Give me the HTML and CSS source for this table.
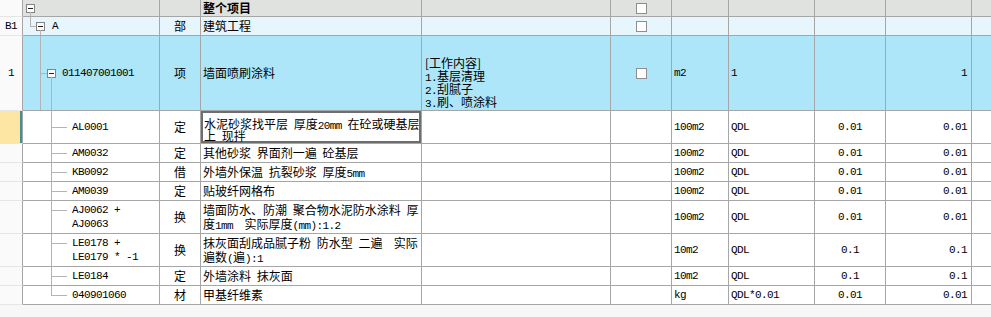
FILE: index.html
```html
<!DOCTYPE html>
<html><head><meta charset="utf-8"><link rel="stylesheet" href="styles.css"></head>
<body>
<div class="grid">
<div class="r hd">
<div class="c c0"></div>
<div class="c c1 t-h"><span class="box"></span></div>
<div class="c c2"></div>
<div class="c c3 b">整个项目</div>
<div class="c c4"></div>
<div class="c c5"><span class="chk"></span></div>
<div class="c c6"></div><div class="c c7"></div><div class="c c8"></div><div class="c c9"></div><div class="c c10"></div>
</div>
<div class="r rb1">
<div class="c c0 m">B1</div>
<div class="c c1 t-b1"><span class="box"></span><span class="m lbl">A</span></div>
<div class="c c2">部</div>
<div class="c c3">建筑工程</div>
<div class="c c4"></div>
<div class="c c5"><span class="chk"></span></div>
<div class="c c6"></div><div class="c c7"></div><div class="c c8"></div><div class="c c9"></div><div class="c c10"></div>
</div>
<div class="r r1">
<div class="c c0 m">1</div>
<div class="c c1 t-1"><span class="box"></span><span class="m lbl2">011407001001</span></div>
<div class="c c2">项</div>
<div class="c c3">墙面喷刷涂料</div>
<div class="c c4 work"><div class="t">[工作内容]<br><span class="m">1.</span>基层清理<br><span class="m">2.</span>刮腻子<br><span class="m">3.</span>刷、喷涂料</div></div>
<div class="c c5"><span class="chk"></span></div>
<div class="c c6 m">m2</div><div class="c c7 m">1</div><div class="c c8"></div><div class="c c9 m">1</div><div class="c c10"></div>
</div>
<div class="r h33 cur">
<div class="c c0"></div>
<div class="c c1 tc"><span class="code m">AL0001</span></div>
<div class="c c2">定</div>
<div class="c c3 edit"><div class="t">水泥砂浆找平层 厚度<span class="m">20mm</span> 在砼或硬基层<br>上 现拌</div></div>
<div class="c c4"></div><div class="c c5"></div>
<div class="c c6 m">100m2</div><div class="c c7 m">QDL</div><div class="c c8 m">0.01</div><div class="c c9 m">0.01</div><div class="c c10"></div>
</div>
<div class="r">
<div class="c c0"></div>
<div class="c c1 tc"><span class="code m">AM0032</span></div>
<div class="c c2">定</div>
<div class="c c3"><div class="t">其他砂浆 界面剂一遍 砼基层</div></div>
<div class="c c4"></div><div class="c c5"></div>
<div class="c c6 m">100m2</div><div class="c c7 m">QDL</div><div class="c c8 m">0.01</div><div class="c c9 m">0.01</div><div class="c c10"></div>
</div>
<div class="r">
<div class="c c0"></div>
<div class="c c1 tc"><span class="code m">KB0092</span></div>
<div class="c c2">借</div>
<div class="c c3"><div class="t">外墙外保温 抗裂砂浆 厚度<span class="m">5mm</span></div></div>
<div class="c c4"></div><div class="c c5"></div>
<div class="c c6 m">100m2</div><div class="c c7 m">QDL</div><div class="c c8 m">0.01</div><div class="c c9 m">0.01</div><div class="c c10"></div>
</div>
<div class="r">
<div class="c c0"></div>
<div class="c c1 tc"><span class="code m">AM0039</span></div>
<div class="c c2">定</div>
<div class="c c3">贴玻纤网格布</div>
<div class="c c4"></div><div class="c c5"></div>
<div class="c c6 m">100m2</div><div class="c c7 m">QDL</div><div class="c c8 m">0.01</div><div class="c c9 m">0.01</div><div class="c c10"></div>
</div>
<div class="r h33">
<div class="c c0"></div>
<div class="c c1 tc"><span class="code m">AJ0062 +<br>AJ0063</span></div>
<div class="c c2">换</div>
<div class="c c3"><div class="t">墙面防水、防潮 聚合物水泥防水涂料 厚<br>度<span class="m">1mm</span>  实际厚度<span class="m">(mm):1.2</span></div></div>
<div class="c c4"></div><div class="c c5"></div>
<div class="c c6 m">100m2</div><div class="c c7 m">QDL</div><div class="c c8 m">0.01</div><div class="c c9 m">0.01</div><div class="c c10"></div>
</div>
<div class="r h33">
<div class="c c0"></div>
<div class="c c1 tc"><span class="code m">LE0178 +<br>LE0179 * -1</span></div>
<div class="c c2">换</div>
<div class="c c3"><div class="t">抹灰面刮成品腻子粉 防水型 二遍  实际<br>遍数<span class="m">(</span>遍<span class="m">):1</span></div></div>
<div class="c c4"></div><div class="c c5"></div>
<div class="c c6 m">10m2</div><div class="c c7 m">QDL</div><div class="c c8 m">0.1</div><div class="c c9 m">0.1</div><div class="c c10"></div>
</div>
<div class="r">
<div class="c c0"></div>
<div class="c c1 tc"><span class="code m">LE0184</span></div>
<div class="c c2">定</div>
<div class="c c3"><div class="t">外墙涂料 抹灰面</div></div>
<div class="c c4"></div><div class="c c5"></div>
<div class="c c6 m">10m2</div><div class="c c7 m">QDL</div><div class="c c8 m">0.1</div><div class="c c9 m">0.1</div><div class="c c10"></div>
</div>
<div class="r">
<div class="c c0"></div>
<div class="c c1 tc last"><span class="code m">040901060</span></div>
<div class="c c2">材</div>
<div class="c c3">甲基纤维素</div>
<div class="c c4"></div><div class="c c5"></div>
<div class="c c6 m">kg</div><div class="c c7 m">QDL*0.01</div><div class="c c8 m">0.01</div><div class="c c9 m">0.01</div><div class="c c10"></div>
</div>
</div>
</body></html>
```
FILE: styles.css
```css
* { box-sizing: border-box; }
body {
  margin: 0;
  background: #f7f7f7;
  font-family: "Noto Sans CJK SC", sans-serif;
  font-size: 12px;
  color: #000;
}
.grid { background: #fff; }
.r {
  display: grid;
  grid-template-columns: 23px 137px 41px 221px 189px 61px 57px 86px 71px 86px 19px;
  height: 19px;
}
.r.hd { height: 17px; background: #dfe2df; }
.r.rb1 { background: #e6f6fc; }
.r.r1 { height: 75px; background: #ade6f8; }
.r.h33 { height: 33px; }
.c {
  position: relative;
  display: flex;
  align-items: center;
  white-space: pre;
  overflow: hidden;
  line-height: 14px;
  border-right: 1px solid #a6a6a6;
  border-bottom: 1px solid #a6a6a6;
  word-spacing: 3px;
}
.t { display: block; }
.c10 { border-right: none; }
.c0 {
  background: #fafafa;
  justify-content: center;
  border-bottom-color: #e6e6e6;
}
.cur .c0 { background: #fde6a3; box-shadow: inset -2px 0 0 #3f9096; }
.m {
  font-family: "Liberation Mono", monospace;
  font-size: 11px;
  letter-spacing: -0.6px;
  word-spacing: 0;
}
.t .m { line-height: 8px; }
.b { font-weight: bold; }
.c2 { justify-content: center; }
.c3 { padding-left: 2px; }
.c4 { padding-left: 3px; }
.c5 { justify-content: center; }
.c6 { padding-left: 2px; }
.c7 { padding-left: 2px; }
.c8 { justify-content: center; }
.c9 { justify-content: flex-end; padding-right: 4px; }
.chk {
  width: 11px;
  height: 11px;
  border: 1px solid #8e8e8e;
  background: #fff;
}
.box {
  position: relative;
  flex: none;
  width: 9px;
  height: 9px;
  border: 1px solid #848484;
  background: #fbfbfb;
}
.box::after {
  content: "";
  position: absolute;
  left: 1px;
  top: 3px;
  width: 5px;
  height: 1px;
  background: #222;
}
.t-h { padding-left: 3px; }
.t-h::after {
  content: "";
  position: absolute;
  left: 7px; top: 12px; bottom: -1px;
  border-left: 1px solid #b4b4b4;
}
.t-b1 { padding-left: 13px; }
.t-b1::before {
  content: "";
  position: absolute;
  left: 7px; top: 0; height: 9px;
  border-left: 1px solid #b4b4b4;
}
.t-b1 .box::before {
  content: "";
  position: absolute;
  left: -7px; top: 3px; width: 6px;
  border-top: 1px solid #b4b4b4;
}
.t-b1::after {
  content: "";
  position: absolute;
  left: 17px; top: 13px; bottom: -1px;
  border-left: 1px solid #b4b4b4;
}
.lbl { margin-left: 7px; }
.t-1 { padding-left: 24px; }
.t-1::before {
  content: "";
  position: absolute;
  left: 17px; top: 0; bottom: 0;
  border-left: 1px solid #b4b4b4;
}
.t-1 .box::before {
  content: "";
  position: absolute;
  left: -8px; top: 3px; width: 7px;
  border-top: 1px solid #b4b4b4;
}
.t-1::after {
  content: "";
  position: absolute;
  left: 28px; top: 41px; bottom: -1px;
  border-left: 1px solid #b4b4b4;
}
.lbl2 { margin-left: 6px; }
.tc { padding-left: 49px; }
.tc::before {
  content: "";
  position: absolute;
  left: 28px; top: 0; bottom: -1px;
  border-left: 1px solid #b4b4b4;
}
.tc.last::before { bottom: 50%; }
.code { position: relative; line-height: 14px; }
.code::before {
  content: "";
  position: absolute;
  left: -21px; top: 7px; width: 16px;
  border-top: 1px solid #b4b4b4;
}
.work {
  align-items: flex-end;
  line-height: 13px;
  padding-bottom: 2px;
}
.edit {
  align-items: flex-start;
  padding-top: 7px;
  padding-left: 3px;
  line-height: 12px;
  box-shadow: inset 0 0 0 2px #6e6e6e;
}
```
